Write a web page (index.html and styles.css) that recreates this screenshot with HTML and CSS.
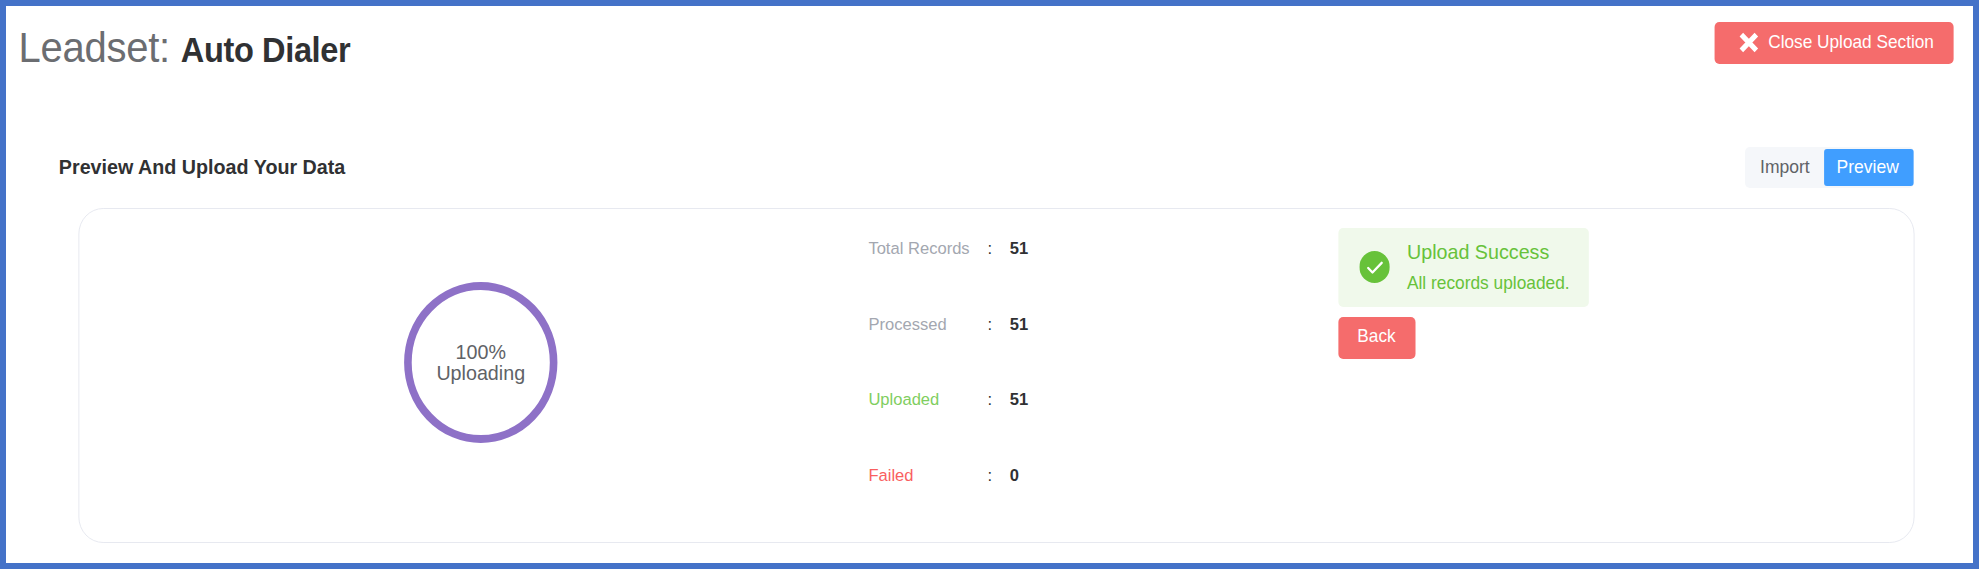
FILE: index.html
```html
<!DOCTYPE html>
<html lang="en">
<head>
<meta charset="utf-8">
<title>Leadset: Auto Dialer</title>
<link rel="stylesheet" href="styles.css">
</head>
<body>
<div class="frame">
  <main class="page">
    <header class="top">
      <h1 class="title">Leadset: <strong class="name">Auto Dialer</strong></h1>
      <button class="btn close"><svg class="cross" viewBox="0 0 20 20"><path d="M2.5 2.5L17.5 17.5M17.5 2.5L2.5 17.5"/></svg><span>Close Upload Section</span></button>
    </header>
    <div class="bar">
      <h2 class="subtitle">Preview And Upload Your Data</h2>
      <div class="tabs"><span class="tab">Import</span><span class="tab active">Preview</span></div>
    </div>
    <section class="card">
      <div class="progress">
        <div class="ring"><span>100%</span><span>Uploading</span></div>
      </div>
      <dl class="stats">
        <dt>Total Records</dt><dd class="colon">:</dd><dd>51</dd>
        <dt>Processed</dt><dd class="colon">:</dd><dd>51</dd>
        <dt class="ok">Uploaded</dt><dd class="colon">:</dd><dd>51</dd>
        <dt class="bad">Failed</dt><dd class="colon">:</dd><dd>0</dd>
      </dl>
      <div class="result">
        <div class="alert">
          <svg class="check" viewBox="0 0 32 32"><circle cx="16" cy="16" r="16"/><path d="M9.3 17L13.8 21.5L23.5 11.8"/></svg>
          <div class="message"><p class="alert-title">Upload Success</p><p class="alert-text">All records uploaded.</p></div>
        </div>
        <button class="btn back">Back</button>
      </div>
    </section>
  </main>
</div>
</body>
</html>
```
FILE: styles.css
```css
* { box-sizing: border-box; margin: 0; padding: 0; }
body { background: #fff; font-family: "Liberation Sans", Arial, sans-serif; color: #606266; }
.frame { width: 1979px; height: 569px; border: 6px solid #4472c8; overflow: hidden; }
/* Content is drawn slightly condensed */
.page { width: 2065.35px; height: 557px; transform: scaleX(0.95238); transform-origin: 0 0; }
.top { display: flex; justify-content: space-between; align-items: flex-start; height: 141px; padding: 15.5px 20px 0 13px; }
.title { font-size: 42px; line-height: 51px; font-weight: 400; color: #6b6d71; letter-spacing: -0.25px; }
.name { font-size: 34.2px; color: #303133; letter-spacing: -0.4px; }
.btn { display: flex; align-items: center; border: 0; border-radius: 5px; background: #f56c6c; color: #fff; font: 18.1px "Liberation Sans", Arial, sans-serif; }
.close { width: 251px; height: 42px; padding: 0 0 1px 25px; gap: 9px; white-space: nowrap; }
.cross { width: 22px; height: 21px; flex: none; fill: none; stroke: #fff; stroke-width: 5; }
.bar { display: flex; justify-content: space-between; padding: 0 62.5px 0 55.5px; height: 61px; }
.subtitle { font-size: 20.7px; line-height: 39px; color: #303133; }
.tabs { display: flex; height: 41px; padding: 2px 0; border-radius: 5px; background: #f5f7fa; font-size: 18.4px; line-height: 36px; }
.tab { width: 83px; padding-left: 1px; text-align: center; }
.active { width: 94px; height: 37px; padding-right: 3px; border-radius: 3px; background: #409eff; color: #fff; }
.card { display: grid; grid-template-columns: 829px 490px 1fr; height: 335px; margin: 0 61px 0 75.5px; border: 1px solid #e6e8f0; border-radius: 26px; }
.progress { display: flex; justify-content: center; padding: 73px 0 0 14px; }
.ring { display: flex; flex-direction: column; align-items: center; justify-content: center; width: 161px; height: 161px; padding: 0 0 2px 1px; border: 8px solid #8e71c7; border-radius: 50%; font-size: 20.7px; line-height: 21px; }
.stats { display: grid; grid-template-columns: 125px 23.5px 60px; grid-auto-rows: 75.6px; padding: 29px 0 0; align-content: start; font-size: 17.4px; line-height: 20px; }
.stats dt { color: #a3a7b0; }
.stats .ok { color: #7fce5f; }
.stats .bad { color: #f95f5f; }
.stats dd { font-weight: 700; color: #303133; }
.stats .colon { font-weight: 400; }
.result { padding: 18.5px 0 0 3px; }
.alert { display: flex; align-items: center; width: 263px; height: 79px; padding-left: 22px; gap: 18.5px; border-radius: 5px; background: #f0f9eb; color: #67c23a; white-space: nowrap; }
.check { width: 32px; height: 32px; fill: #67c23a; }
.check path { fill: none; stroke: #fff; stroke-width: 2.4; stroke-linecap: round; stroke-linejoin: round; }
.alert-title { font-size: 20.7px; line-height: 31px; }
.alert-text { font-size: 18.2px; line-height: 32px; }
.back { width: 81px; height: 42px; margin-top: 10px; padding-bottom: 3px; justify-content: center; }
```
